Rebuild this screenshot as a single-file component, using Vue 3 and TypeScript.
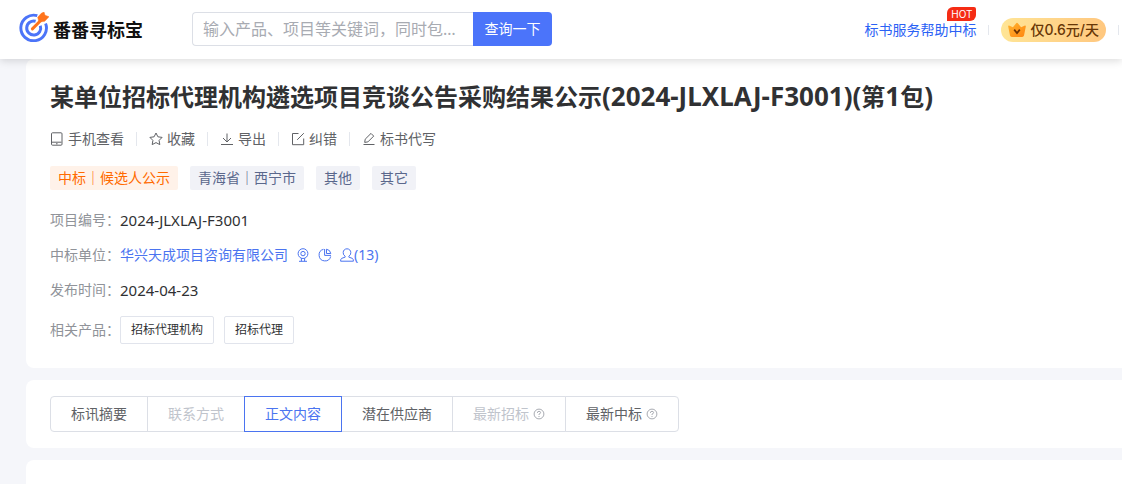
<script setup lang="ts">
import { ref } from 'vue'

interface Action {
  label: string
  icon: 'phone' | 'star' | 'download' | 'edit' | 'pen'
}

interface Tab {
  label: string
  disabled?: boolean
  help?: boolean
}

const keyword = ref('')
const activeTab = ref('正文内容')

const actions: Action[] = [
  { label: '手机查看', icon: 'phone' },
  { label: '收藏', icon: 'star' },
  { label: '导出', icon: 'download' },
  { label: '纠错', icon: 'edit' },
  { label: '标书代写', icon: 'pen' },
]

const tags: string[] = ['中标｜候选人公示', '青海省｜西宁市', '其他', '其它']
const products: string[] = ['招标代理机构', '招标代理']

const tabs: Tab[] = [
  { label: '标讯摘要' },
  { label: '联系方式', disabled: true },
  { label: '正文内容' },
  { label: '潜在供应商' },
  { label: '最新招标', disabled: true, help: true },
  { label: '最新中标', help: true },
]
</script>

<template>
  <div class="page">
    <header class="header">
      <a class="logo" href="#">
        <svg class="logo-mark" viewBox="0 0 30 30" aria-hidden="true">
          <g fill="none" stroke="#4c74f8">
            <path d="M18.3 3.7A12.8 12.8 0 1 0 26.6 11.400" stroke-width="2.900" />
            <path d="M16.600 9.300A7 7 0 1 0 21.300 13.700" stroke-width="3" />
          </g>
          <path d="M13.400 16.900 22 8.300" stroke="#ff741c" stroke-width="3" stroke-linecap="round" />
          <path
            d="M18.700 5.300 22.300 1.300 25 0 26 3.300 30 4.700 25.700 9.300 20 10z"
            fill="#ff741c"
            stroke="#ff741c"
            stroke-width=".5"
            stroke-linejoin="round"
          />
        </svg>
        <span class="logo-name">番番寻标宝</span>
      </a>
      <form class="search" @submit.prevent>
        <input
          v-model="keyword"
          class="search-input"
          type="text"
          aria-label="搜索"
          placeholder="输入产品、项目等关键词，同时包含多个关键词"
        />
        <button class="search-button" type="submit">查询一下</button>
      </form>
      <nav class="header-links">
        <a class="service" href="#">标书服务帮助中标<span class="hot">HOT</span></a>
        <span class="rule"></span>
        <a class="vip" href="#">
          <svg class="crown" viewBox="0 0 18 16" aria-hidden="true">
            <defs>
              <linearGradient id="crown-fill" x1="0" x2="1" y1="0" y2="1">
                <stop offset="0" stop-color="#ffb32e" />
                <stop offset="1" stop-color="#ff8610" />
              </linearGradient>
            </defs>
            <path
              d="M1 3.6 4.9 5.2 8.2 1.2Q9 .4 9.8 1.2L13.1 5.2 17 3.6Q18 3.5 17.8 4.6L16 13.6Q15.7 15 14.2 15H3.8Q2.3 15 2 13.6L.2 4.6Q0 3.5 1 3.6Z"
              fill="url(#crown-fill)"
            />
            <path d="m6.2 7.6 2.8 3.5 2.8-3.5" fill="none" stroke="#6b3200" stroke-width="1.7" />
          </svg>
          <span>仅0.6元/天</span>
        </a>
        <span class="rule"></span>
      </nav>
    </header>

    <main class="content">
      <section class="card summary">
        <h1 class="title">某单位招标代理机构遴选项目竞谈公告采购结果公示<span class="latin">(2024-JLXLAJ-F3001)(</span>第<span class="latin">1</span>包<span class="latin">)</span></h1>

        <div class="actions">
          <button v-for="action in actions" :key="action.label" class="action" type="button">
            <svg class="icon" viewBox="0 0 14 14" aria-hidden="true">
              <g v-if="action.icon === 'phone'">
                <rect x="1.5" y=".8" width="10.5" height="12.4" rx="1" />
                <path d="M2 10.2h9.5M6 11.8h1.6" />
              </g>
              <path
                v-else-if="action.icon === 'star'"
                d="m7 1 1.9 3.8 4.2.6-3 3 .7 4.2L7 10.6l-3.8 2 .7-4.2-3-3 4.2-.6z"
              />
              <path v-else-if="action.icon === 'download'" d="M7 1.5v8.2M3 6l4 4 4-4M1 12.5h12" />
              <path
                v-else-if="action.icon === 'edit'"
                d="M7.5 1.5H1.500v11.200h11.200V6.5M12.8 1.2 6.2 7.8"
              />
              <path
                v-else
                d="M3.200 7.200 9 1.400l2.700 2.700-5.800 5.800-3.200.5zM1.500 12.500h11"
              />
            </svg>
            <span>{{ action.label }}</span>
          </button>
        </div>

        <div class="tags">
          <span v-for="(tag, i) in tags" :key="tag" class="tag" :class="{ hotTag: i === 0 }">{{ tag }}</span>
        </div>

        <dl class="facts">
          <div class="fact">
            <dt>项目编号：</dt>
            <dd class="value">2024-JLXLAJ-F3001</dd>
          </div>
          <div class="fact">
            <dt>中标单位：</dt>
            <dd class="company">
              <a href="#">华兴天成项目咨询有限公司</a>
              <a class="icon-link" href="#" aria-label="企业位置">
                <svg class="icon" viewBox="0 0 14 14" aria-hidden="true">
                  <circle cx="7" cy="5.6" r="4.9" />
                  <circle cx="7" cy="5.6" r="2.2" />
                  <path d="M5.4 10.2v3M8.6 10.2v3M3 13.3h8" />
                </svg>
              </a>
              <a class="icon-link" href="#" aria-label="企业分析">
                <svg class="icon" viewBox="0 0 14 14" aria-hidden="true">
                  <path d="M5.500 1.300A5.900 5.900 0 1 0 12.700 8.500M6.600 1v6.400H13" />
                  <path d="M8.500 1.200A5.200 5.200 0 0 1 12.800 5.500H8.500z" />
                </svg>
              </a>
              <a class="contacts" href="#">
                <svg class="icon" viewBox="0 0 14 14" aria-hidden="true">
                  <path
                    d="M5.2 8.3A4 4 0 0 1 3.2 4.6C3.2 2.4 4.8.8 7 .8s3.8 1.6 3.8 3.8a4 4 0 0 1-2 3.7v.8l3.6 1.3q1 .5 1 2.8H.6q0-2.3 1-2.8l3.6-1.3z"
                  />
                </svg>
                <span class="value">(13)</span>
              </a>
            </dd>
          </div>
          <div class="fact">
            <dt>发布时间：</dt>
            <dd class="value">2024-04-23</dd>
          </div>
          <div class="fact related">
            <dt>相关产品：</dt>
            <dd class="products">
              <a v-for="product in products" :key="product" class="product" href="#">{{ product }}</a>
            </dd>
          </div>
        </dl>
      </section>

      <section class="card tab-card">
        <div class="tabs" role="tablist">
          <button
            v-for="tab in tabs"
            :key="tab.label"
            class="tab"
            :class="{ active: tab.label === activeTab }"
            type="button"
            role="tab"
            :aria-selected="tab.label === activeTab"
            :disabled="tab.disabled"
            @click="activeTab = tab.label"
          >
            <span>{{ tab.label }}</span>
            <svg v-if="tab.help" class="help" viewBox="0 0 12 12" aria-hidden="true">
              <circle cx="6" cy="6" r="4.9" />
              <path d="M4.4 4.9q0-1.6 1.6-1.6t1.6 1.4Q7.6 5.5 6 6.2V7M6 8v1" />
            </svg>
          </button>
        </div>
      </section>

      <section class="card body-card"></section>
    </main>
  </div>
</template>

<style>
body {
  background: #f5f6fa;
}
</style>

<style scoped>
.page {
  min-height: 100vh;
  overflow: hidden;
  background: #f5f6fa;
  color: #303133;
  font-family: "Noto Sans", "Noto Sans CJK SC", sans-serif;
  font-size: 14px;
  line-height: 20px;
}

.page * {
  box-sizing: border-box;
}

a {
  color: inherit;
  text-decoration: none;
}

button,
input {
  font: inherit;
}

button {
  cursor: pointer;
}

.header {
  position: relative;
  display: flex;
  align-items: center;
  height: 59px;
  padding: 0 3px 0 19px;
  background: #fff;
  box-shadow: 0 2px 8px rgba(0, 0, 0, 0.14);
}

.logo {
  display: flex;
  align-items: center;
  gap: 4px;
  width: 173px;
  color: #111;
}

.logo-mark {
  width: 30px;
  height: 30px;
  margin-bottom: 5px;
}

.logo-name {
  font-size: 18px;
  font-weight: 700;
  line-height: 24px;
}

.search {
  display: flex;
  width: 360px;
  height: 34px;
  margin-bottom: 1px;
}

.search-input {
  flex: 1;
  min-width: 0;
  padding: 0 11px 0 10px;
  border: 1px solid #dcdfe6;
  border-right: 0;
  border-radius: 4px 0 0 4px;
  outline: 0;
  background: #fff;
  color: #303133;
  font-size: 16px;
  text-overflow: ellipsis;
}

.search-input::placeholder {
  color: #a8abb2;
}

.search-button {
  width: 79px;
  padding: 0;
  border: 0;
  border-radius: 0 4px 4px 0;
  background: #4b74fa;
  color: #fff;
}

.header-links {
  display: flex;
  align-items: center;
  gap: 12px;
  margin-left: auto;
}

.service {
  position: relative;
  color: #2b62f5;
}

.hot {
  position: absolute;
  right: 0;
  bottom: 19px;
  padding: 0 4px;
  border-radius: 6px 2px 6px 0;
  background: #f52c14;
  color: #fff;
  font-family: Inter, sans-serif;
  font-size: 10px;
  line-height: 14px;
}

.rule {
  width: 1px;
  height: 10px;
  background: #e4e7ed;
}

.vip {
  display: flex;
  align-items: center;
  gap: 4px;
  height: 24px;
  padding: 0 7px;
  border-radius: 12px;
  background: linear-gradient(90deg, #ffe596, #ffc77f);
  color: #683606;
  font-family: Inter, "Noto Sans CJK SC", sans-serif;
  font-weight: 500;
}

.crown {
  width: 18px;
  height: 16px;
}

.content {
  display: flex;
  flex-direction: column;
  gap: 12px;
  padding-left: 26px;
}

.card {
  padding: 16px 24px;
  border-radius: 8px 0 0 8px;
  background: #fff;
}

.summary {
  padding: 22px 24px 23px;
}

.title {
  margin: 0;
  color: #303133;
  font-size: 24px;
  font-weight: 700;
  line-height: 32px;
}

.latin {
  font-size: 26px;
  line-height: 24px;
}

.actions {
  display: flex;
  margin-top: 16px;
  color: #606266;
}

.action {
  display: flex;
  align-items: center;
  gap: 4px;
  padding: 0;
  border: 0;
  background: none;
  color: inherit;
}

.action + .action::before {
  width: 1px;
  height: 14px;
  margin: 0 8px 0 12px;
  background: #e4e7ed;
  content: "";
}

.icon {
  flex: none;
  width: 14px;
  height: 14px;
  fill: none;
  stroke: currentColor;
  stroke-width: 1;
}

.tags {
  display: flex;
  gap: 12px;
  margin-top: 17px;
}

.tag {
  padding: 0 8px;
  border-radius: 2px;
  background: #f1f2f7;
  color: #5a678c;
  line-height: 24px;
}

.hotTag {
  background: #fff2e9;
  color: #ff6a00;
}

.facts {
  display: flex;
  flex-direction: column;
  gap: 15px;
  margin: 20px 0 0;
}

.fact {
  display: flex;
  align-items: center;
}

dt {
  color: #909399;
}

dd {
  margin: 0;
}

.value {
  font-size: 15px;
}

.company {
  display: flex;
  align-items: center;
  gap: 8px;
  color: #4b74f0;
}

.icon-link,
.contacts {
  display: flex;
  align-items: center;
}

.contacts .value {
  font-size: 14px;
}

.related {
  height: 30px;
}

.products {
  display: flex;
  gap: 10px;
}

.product {
  padding: 0 10px;
  border: 1px solid #e1e4ec;
  border-radius: 2px;
  font-size: 12px;
  line-height: 26px;
}

.tabs {
  display: flex;
}

.tab {
  display: flex;
  align-items: center;
  gap: 4px;
  height: 36px;
  padding: 0 20px;
  border: 1px solid #dcdfe6;
  background: #fff;
  color: #606266;
}

.tab + .tab {
  margin-left: -1px;
}

.tab:first-child {
  border-radius: 4px 0 0 4px;
}

.tab:last-child {
  border-radius: 0 4px 4px 0;
}

.tab:disabled {
  color: #c0c4cc;
  cursor: default;
}

.tab.active {
  z-index: 1;
  border-color: #4b74f0;
  color: #4b74f0;
}

.help {
  width: 12px;
  height: 12px;
  fill: none;
  stroke: #a8abb2;
}

.body-card {
  height: 120px;
  margin-bottom: -96px;
}
</style>
